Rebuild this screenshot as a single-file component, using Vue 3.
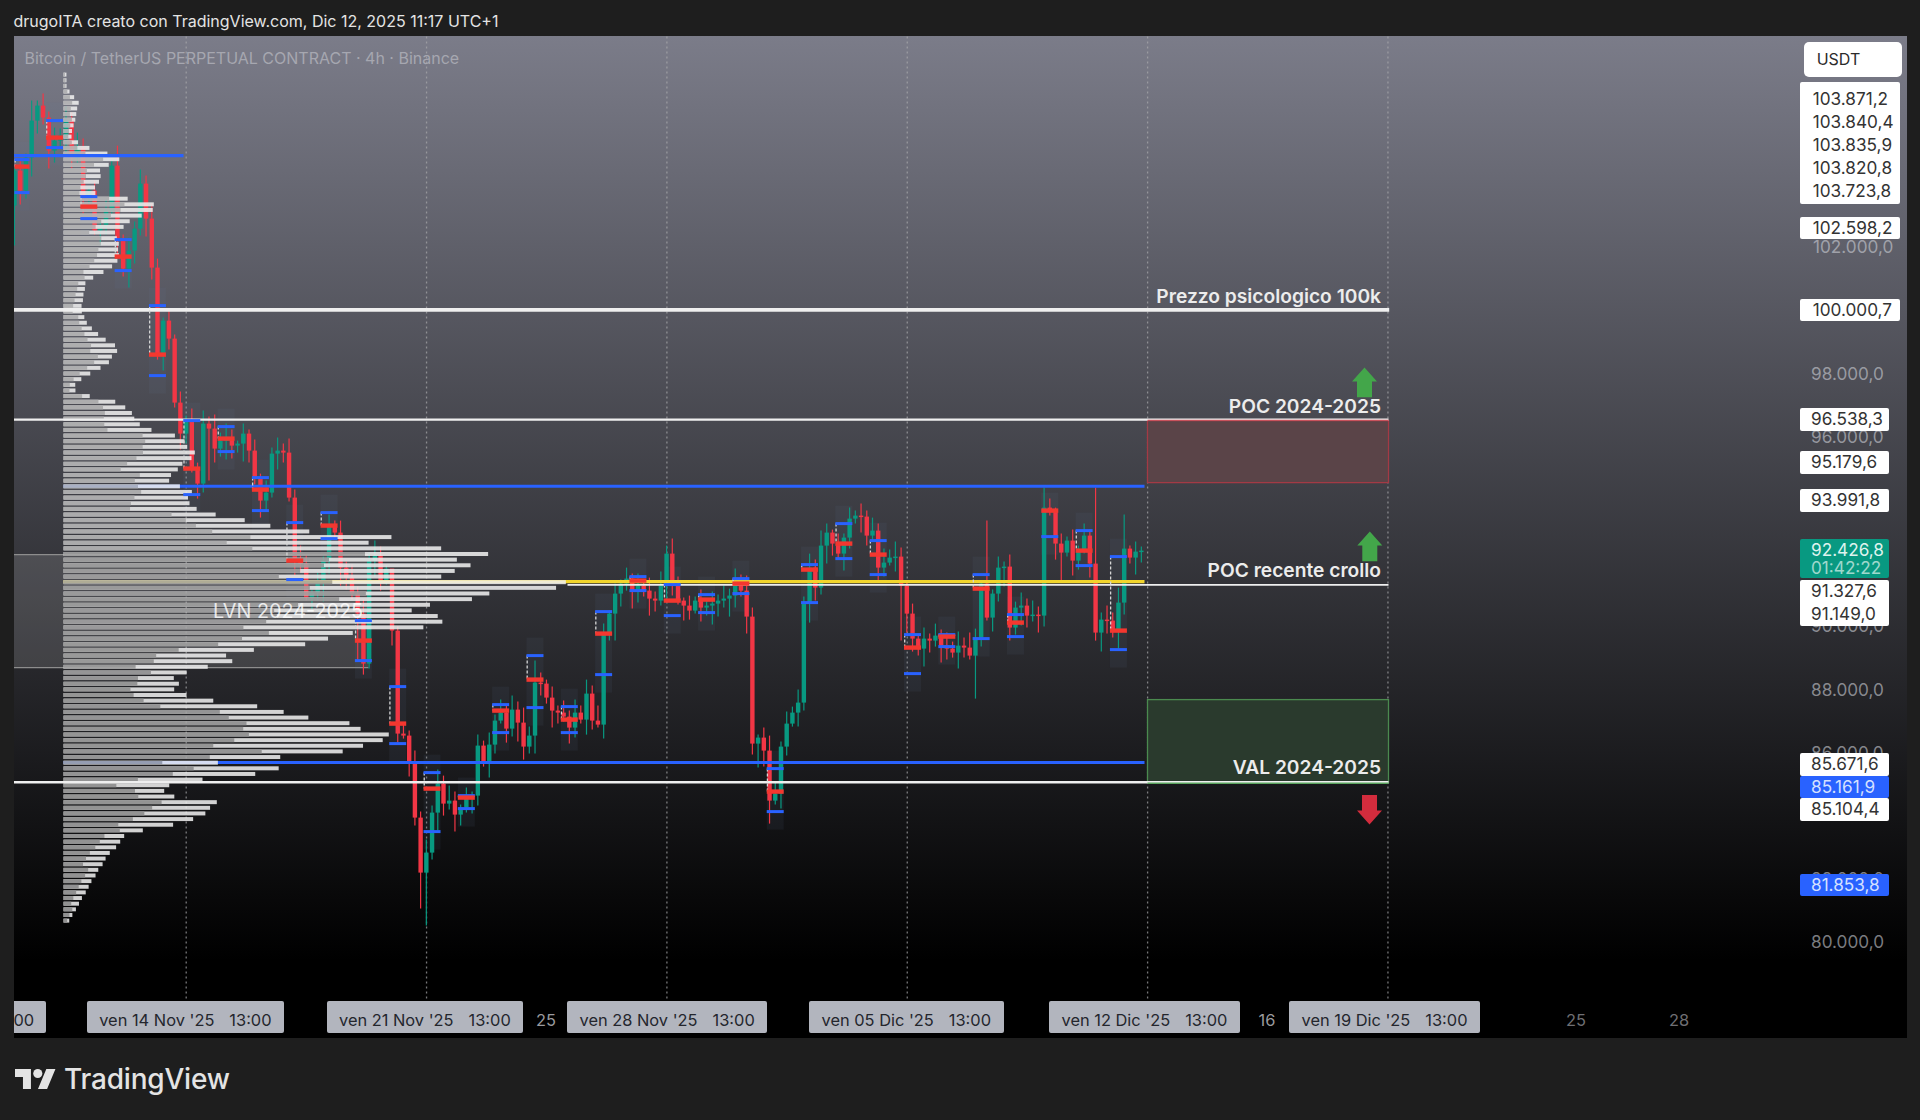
<script setup>
// page px -> chart px (the chart sits at 13.5, 36, drawings are nudged a bit down)
const ox = 13.5
const oy = 35.4

const gridX = [0, 1, 2, 3, 4, 5].map(k => 185.7 + 240.35 * k)

// closes in page y, one per 4h bar, open = previous close
const closes = [170, 190, 157, 120, 105, 117, 150, 140, 135, 120, 157, 147, 197, 190, 230, 225, 210, 165, 240, 268,
  250, 228, 183, 218, 267, 353, 320, 338, 402, 433, 420, 468, 483, 423, 428, 448, 440, 438, 445, 443,
  433, 450, 478, 500, 492, 453, 450, 452, 497, 560, 563, 597, 592, 582, 560, 525, 532, 567, 577, 593,
  613, 663, 560, 555, 580, 568, 630, 733, 735, 762, 817, 872, 852, 812, 783, 803, 800, 814, 807, 797,
  795, 745, 762, 744, 720, 712, 728, 709, 722, 746, 735, 682, 683, 697, 710, 712, 716, 727, 712, 719,
  693, 720, 724, 632, 613, 593, 583, 578, 590, 585, 590, 598, 600, 585, 553, 585, 600, 605, 610, 600,
  607, 605, 603, 600, 598, 595, 582, 590, 616, 743, 737, 750, 800, 793, 746, 723, 712, 702, 603, 567,
  587, 545, 532, 543, 553, 537, 518, 515, 516, 535, 530, 567, 562, 557, 556, 585, 613, 638, 648, 638,
  640, 635, 645, 648, 652, 645, 647, 655, 637, 583, 617, 593, 567, 566, 627, 607, 605, 615, 614, 615,
  507, 510, 543, 552, 540, 560, 550, 535, 563, 632, 619, 620, 630, 602, 548, 557, 551, 550]

const wickHigh = { 180: 487, 189: 487, 194: 514, 3: 100, 18: 145, 66: 575, 170: 520, 91: 660, 132: 735 }
const wickLow = { 0: 245, 71: 908, 72: 925, 168: 698, 105: 640, 34: 480, 60: 660, 183: 580, 155: 640, 132: 823, 130: 767 }

const candles = closes.map((close, i) => {
  const open = i === 0 ? 205 : closes[i - 1]
  const top = Math.min(open, close)
  const bottom = Math.max(open, close)
  return {
    x: 14 + 5.72 * i,
    top,
    h: Math.max(bottom - top, 1.5),
    high: wickHigh[i] ?? top - (3 + (i * 7) % 13),
    low: wickLow[i] ?? bottom + (3 + (i * 11) % 17),
    color: close > open ? '#f23645' : '#089981'
  }
})

// anchored footprint blocks: top level, poc, bottom level
const blocks = [[159, 166, 192], [120, 137, 147], [196, 206, 218], [239, 256, 270], [305, 354, 375],
  [420, 468, 494], [426, 438, 451], [477, 489, 510], [522, 560, 579], [512, 525, 538], [620, 640, 660],
  [686, 723, 743], [772, 788, 831], [795, 797, 808], [704, 710, 732], [655, 679, 707], [706, 719, 732],
  [611, 633, 674], [576, 580, 590], [584, 600, 615], [594, 599, 612], [578, 583, 593], [768, 791, 811],
  [564, 569, 602], [523, 543, 558], [540, 554, 574], [634, 647, 673], [634, 636, 646], [574, 588, 638],
  [614, 622, 636], [0, 510, 536], [530, 550, 565], [556, 630, 649]]
  .map(([t, p, b], k) => ({ x: k === 0 ? 14 : 45.5 + 34.32 * (k - 1), t, p, b, w: k === 0 ? 15 : 17 }))

// volume profile outline: [y, right edge x]
const outline = [[72, 66], [85, 66], [90, 70], [100, 78], [120, 74], [133, 70], [140, 78], [146, 90], [155, 122], [166, 100],
  [175, 100], [190, 92], [197, 134], [201, 154], [210, 150], [218, 130], [230, 115], [245, 118], [260, 118], [280, 85],
  [300, 82], [305, 80], [318, 85], [330, 95], [345, 118], [360, 108], [380, 75], [390, 75], [395, 95], [400, 120],
  [410, 130], [423, 140], [430, 155], [432, 174], [440, 185], [450, 195], [465, 180], [475, 165], [485, 181], [490, 190],
  [500, 187], [505, 195], [515, 225], [518, 245], [525, 283], [532, 330], [533, 390], [540, 370], [543, 415], [547, 450],
  [551, 480], [555, 473], [560, 440], [563, 470], [568, 465], [572, 430], [576, 455], [581, 600], [585, 567], [589, 510],
  [593, 465], [598, 465], [602, 435], [606, 408], [610, 412], [615, 438], [619, 445], [623, 441], [628, 380], [632, 343],
  [637, 325], [642, 300], [646, 265], [652, 225], [660, 230], [665, 205], [670, 185], [675, 170], [680, 182], [685, 170],
  [690, 178], [695, 200], [700, 222], [705, 266], [710, 290], [715, 308], [720, 343], [725, 355], [730, 390], [735, 382],
  [740, 370], [745, 362], [750, 333], [755, 278], [759, 282], [760, 218], [764, 218], [766, 285], [770, 272], [775, 220],
  [780, 175], [785, 160], [795, 175], [800, 217], [810, 205], [820, 190], [825, 150], [833, 125], [857, 104], [888, 86], [921, 67]]

function edgeAt(y) {
  for (let i = 1; i < outline.length; i++) {
    if (y <= outline[i][0]) {
      const [y0, x0] = outline[i - 1]
      const [y1, x1] = outline[i]
      return x0 + (x1 - x0) * (y - y0) / (y1 - y0)
    }
  }
  return 66
}

const rows = []
for (let y = 72; y < 922; y += 5.64) {
  const i = rows.length
  const w = Math.max(edgeAt(y) - 63, 3) * (1 + (((i * 37) % 11) - 5) * 0.004)
  rows.push({ y, w, dark: w * (0.5 + ((i * 13) % 7) * 0.035), shade: y < 550 ? '#bcbcbc' : '#a6a6a6' })
}

const axisTicks = [102, 98, 96, 90, 88, 86, 82, 80].map(k => ({
  text: k + '.000,0',
  top: 941.7 - (k - 80) * 31.6 - oy - 11,
  wide: k >= 100
}))

const tags = [
  { lines: ['103.871,2', '103.840,4', '103.835,9', '103.820,8', '103.723,8'], top: 81.7, wide: true, cls: 'stack' },
  { lines: ['102.598,2'], top: 216, wide: true },
  { lines: ['100.000,7'], top: 298, wide: true },
  { lines: ['96.538,3'], top: 407.7 },
  { lines: ['95.179,6'], top: 450.7 },
  { lines: ['93.991,8'], top: 488.2 },
  { lines: ['92.426,8', '01:42:22'], top: 538, cls: 'last' },
  { lines: ['91.327,6', '91.149,0'], top: 579.3 },
  { lines: ['85.671,6'], top: 752.3 },
  { lines: ['85.161,9'], top: 775, cls: 'blue' },
  { lines: ['85.104,4'], top: 797.8 },
  { lines: ['81.853,8'], top: 873, cls: 'blue' }
].map(t => ({ ...t, top: t.top - oy }))

const dates = [
  { date: "ven 14 Nov '25", left: 86.7 },
  { date: "ven 21 Nov '25", left: 326.5 },
  { date: "ven 28 Nov '25", left: 567 },
  { date: "ven 05 Dic '25", left: 809 },
  { date: "ven 12 Dic '25", left: 1049 },
  { date: "ven 19 Dic '25", left: 1289 }
].map(d => ({ ...d, left: d.left - ox }))

const dayTicks = [
  { text: '25', x: 546 },
  { text: '16', x: 1267 },
  { text: '25', x: 1576, dim: true },
  { text: '28', x: 1679, dim: true }
].map(d => ({ ...d, x: d.x - ox }))

const notes = [
  { text: 'Prezzo psicologico 100k', y: 295 - oy },
  { text: 'POC 2024-2025', y: 405 - oy },
  { text: 'POC recente crollo', y: 569.3 - oy },
  { text: 'VAL 2024-2025', y: 766.7 - oy }
]
</script>

<template>
  <div class="page">
    <header class="top-bar">drugoITA creato con TradingView.com, Dic 12, 2025 11:17 UTC+1</header>

    <main class="chart">
      <svg class="plot" viewBox="13.5 35.4 1893 1002" width="1893" height="1002">
        <line v-for="x in gridX" :key="x" :x1="x" :x2="x" y1="36" y2="1000" class="grid" />

        <rect x="13.5" y="554" width="354.5" height="113" fill="#fff" fill-opacity="0.12" />
        <line x1="13.5" x2="368" y1="554" y2="554" class="lvn-edge" />
        <line x1="13.5" x2="368" y1="667" y2="667" class="lvn-edge" />

        <rect x="1147" y="420" width="241" height="62" class="zone-red" />
        <rect x="1147" y="699" width="241" height="83" class="zone-green" />

        <g v-for="b in blocks" :key="'bg' + b.x">
          <rect :x="b.x" :y="(b.t || b.p) - 18" :width="b.w" :height="b.b - (b.t || b.p) + 36" fill="#5f7f9f" fill-opacity="0.09" />
        </g>

        <g v-for="c in candles" :key="c.x">
          <line :x1="c.x" :x2="c.x" :y1="c.high" :y2="c.low" :stroke="c.color" stroke-width="1.2" />
          <rect :x="c.x - 2.2" :y="c.top" width="4.4" :height="c.h" :fill="c.color" />
        </g>

        <line x1="63" x2="1144" y1="485.7" y2="485.7" class="blue-line" />
        <line x1="63" x2="1144" y1="762" y2="762" class="blue-line" />
        <line x1="63" x2="1144" y1="581" y2="581" class="yellow-line" />

        <g class="profile">
          <g v-for="r in rows" :key="r.y">
            <rect x="63" :y="r.y" :width="r.w" height="4" fill="#efefef" />
            <rect x="63" :y="r.y" :width="r.dark" height="4" :fill="r.shade" />
          </g>
        </g>

        <line x1="13.5" x2="183" y1="155" y2="155" class="blue-line thick" />
        <line x1="13.5" x2="1388.7" y1="309.3" y2="309.3" class="white-line thick" />
        <line x1="13.5" x2="1388" y1="419" y2="419" class="white-line" />
        <line x1="567" x2="1388" y1="584.3" y2="584.3" class="white-line thin" />
        <line x1="13.5" x2="1388" y1="781.7" y2="781.7" class="white-line" />
        <line x1="1147" x2="1388" y1="419.8" y2="419.8" class="red-edge" />
        <line x1="1147" x2="1388" y1="782.6" y2="782.6" class="green-edge" />

        <g v-for="b in blocks" :key="'lv' + b.x">
          <line :x1="b.x + 0.7" :x2="b.x + 0.7" :y1="b.t || b.p" :y2="b.p" class="dash" />
          <line v-if="b.t" :x1="b.x" :x2="b.x + b.w" :y1="b.t" :y2="b.t" class="level" />
          <line :x1="b.x" :x2="b.x + b.w" :y1="b.p" :y2="b.p" class="poc" />
          <line :x1="b.x" :x2="b.x + b.w" :y1="b.b" :y2="b.b" class="level" />
        </g>

        <path d="M1364 367l12.5 14h-5v15.7h-15v-15.7h-5z" fill="#43a64a" />
        <path d="M1369.3 531l12.5 14h-5v15.7h-15v-15.7h-5z" fill="#43a64a" />
        <path d="M1369 824l12.5-14h-5v-15.7h-15v15.7h-5z" fill="#d32c3d" />
      </svg>

      <div class="chart-title">Bitcoin / TetherUS PERPETUAL CONTRACT · 4h · Binance</div>
      <div class="lvn-label">LVN 2024-2025</div>
      <div v-for="n in notes" :key="n.text" class="note" :style="{ top: n.y + 'px' }">{{ n.text }}</div>

      <div class="currency">USDT</div>
      <div
        v-for="t in axisTicks"
        :key="t.text"
        class="axis-tick"
        :class="{ wide: t.wide }"
        :style="{ top: t.top + 'px' }"
      >{{ t.text }}</div>
      <div
        v-for="t in tags"
        :key="t.lines[0]"
        class="tag"
        :class="[t.cls, { wide: t.wide }]"
        :style="{ top: t.top + 'px' }"
      >
        <span v-for="line in t.lines" :key="line">{{ line }}</span>
      </div>

      <div class="date-tag first">00</div>
      <div v-for="d in dates" :key="d.date" class="date-tag" :style="{ left: d.left + 'px' }">
        <span>{{ d.date }}</span><span>13:00</span>
      </div>
      <div
        v-for="d in dayTicks"
        :key="d.x"
        class="day-tick"
        :class="{ dim: d.dim }"
        :style="{ left: d.x + 'px' }"
      >{{ d.text }}</div>
    </main>

    <footer class="brand">
      <svg class="brand-logo" viewBox="0 4 36 18" width="41" height="20.5">
        <path d="M14 22H7V11H0V4h14v18zM28 22h-8l7.5-18h8L28 22z" fill="#e4e4e4" />
        <circle cx="20" cy="8" r="4" fill="#e4e4e4" />
      </svg>
      <span class="brand-name">TradingView</span>
    </footer>
  </div>
</template>

<style>
body {
  background: #1e1e1e;
}
</style>

<style scoped>
.page {
  width: 1920px;
  height: 1120px;
  background: #1e1e1e;
  font-family: Inter, "Liberation Sans", sans-serif;
  display: flex;
  flex-direction: column;
  overflow: hidden;
}

.top-bar {
  height: 36px;
  box-sizing: border-box;
  padding: 6px 0 0 13.5px;
  line-height: 30px;
  font-size: 16px;
  color: #e4e4e4;
  white-space: nowrap;
}

.chart {
  position: relative;
  width: 1893px;
  height: 1002px;
  margin-left: 13.5px;
  overflow: hidden;
  background: linear-gradient(180deg, #7b7c89 0, #000 925px);
  font-size: 17.2px;
}

.plot {
  position: absolute;
  left: 0;
  top: 0;
}

.grid {
  stroke: #a9a9ad;
  stroke-opacity: 0.7;
  stroke-width: 1.3;
  stroke-dasharray: 2 3;
}

.lvn-edge {
  stroke: #8d8d8d;
  stroke-width: 1.4;
}

.zone-red {
  fill: #5a4448;
  stroke: #a33a45;
  stroke-width: 1.3;
}

.zone-green {
  fill: #2a3a2d;
  stroke: #4b8a4f;
  stroke-width: 1.3;
}

.blue-line {
  stroke: #2962ff;
  stroke-width: 3;
}

.blue-line.thick {
  stroke-width: 3.4;
}

.yellow-line {
  stroke: #f2d52c;
  stroke-width: 3.4;
}

.profile {
  opacity: 0.87;
}

.white-line {
  stroke: #efefef;
  stroke-width: 2.4;
}

.white-line.thick {
  stroke-width: 3.6;
}

.white-line.thin {
  stroke-width: 1.8;
}

.red-edge {
  stroke: #c8525c;
  stroke-width: 1.4;
}

.green-edge {
  stroke: #5aa45e;
  stroke-width: 1.6;
}

.dash {
  stroke: #d5d5d5;
  stroke-width: 1.3;
  stroke-dasharray: 3 2;
}

.level {
  stroke: #2962ff;
  stroke-width: 3;
}

.poc {
  stroke: #f4372f;
  stroke-width: 4.4;
}

.chart-title {
  position: absolute;
  left: 11px;
  top: 12px;
  line-height: 20px;
  font-size: 16px;
  color: #a6a7b0;
  white-space: nowrap;
}

.lvn-label {
  position: absolute;
  left: 199.5px;
  top: 565px;
  line-height: 20px;
  font-size: 19.8px;
  color: rgba(255, 255, 255, 0.82);
  white-space: nowrap;
}

.note {
  position: absolute;
  right: 525.5px;
  line-height: 20px;
  margin-top: -10px;
  font-size: 19.2px;
  font-weight: 600;
  color: #ececec;
  white-space: nowrap;
}

.currency {
  position: absolute;
  left: 1790.5px;
  top: 5.7px;
  width: 98px;
  height: 35px;
  box-sizing: border-box;
  padding-left: 12.7px;
  line-height: 35px;
  font-size: 16px;
  background: #fff;
  border-radius: 5px;
  color: #2b2b2b;
}

.axis-tick {
  position: absolute;
  left: 1797.5px;
  line-height: 22px;
  color: rgba(205, 207, 214, 0.6);
  white-space: nowrap;
}

.axis-tick.wide {
  left: 1799.5px;
}

.tag {
  position: absolute;
  left: 1786.5px;
  width: 89px;
  box-sizing: border-box;
  padding-left: 11px;
  background: #fff;
  border-radius: 2px;
  color: #333;
  line-height: 22.85px;
  display: flex;
  flex-direction: column;
}

.tag.wide {
  width: 100px;
  padding-left: 12.7px;
}

.tag.stack {
  padding: 6px 0 1px 12.7px;
}

.tag.last {
  background: #089981;
  color: #dff3ee;
  padding-top: 2px;
  padding-bottom: 1px;
  line-height: 18.4px;
}

.tag.last span + span {
  opacity: 0.7;
}

.tag.blue {
  background: #2962ff;
  color: #d4e0ff;
}

.date-tag {
  position: absolute;
  top: 965px;
  height: 32px;
  box-sizing: border-box;
  padding: 6px 12.5px 0;
  background: #b2b5be;
  border-radius: 2px;
  font-size: 16.4px;
  color: #24262d;
  line-height: 26px;
  display: flex;
  gap: 15px;
  white-space: nowrap;
}

.date-tag.first {
  left: 0;
  width: 32px;
  padding-left: 0;
  border-radius: 0 2px 2px 0;
}

.day-tick {
  position: absolute;
  top: 972px;
  transform: translateX(-50%);
  line-height: 24px;
  font-size: 16.4px;
  color: #9a9a9e;
}

.day-tick.dim {
  color: #6f6f73;
}

.brand {
  flex: 1;
  display: flex;
  align-items: center;
  padding-left: 15px;
  gap: 8px;
}

.brand-logo {
  display: block;
}

.brand-name {
  font-size: 28px;
  font-weight: 500;
  letter-spacing: -0.2px;
  color: #e4e4e4;
}
</style>
